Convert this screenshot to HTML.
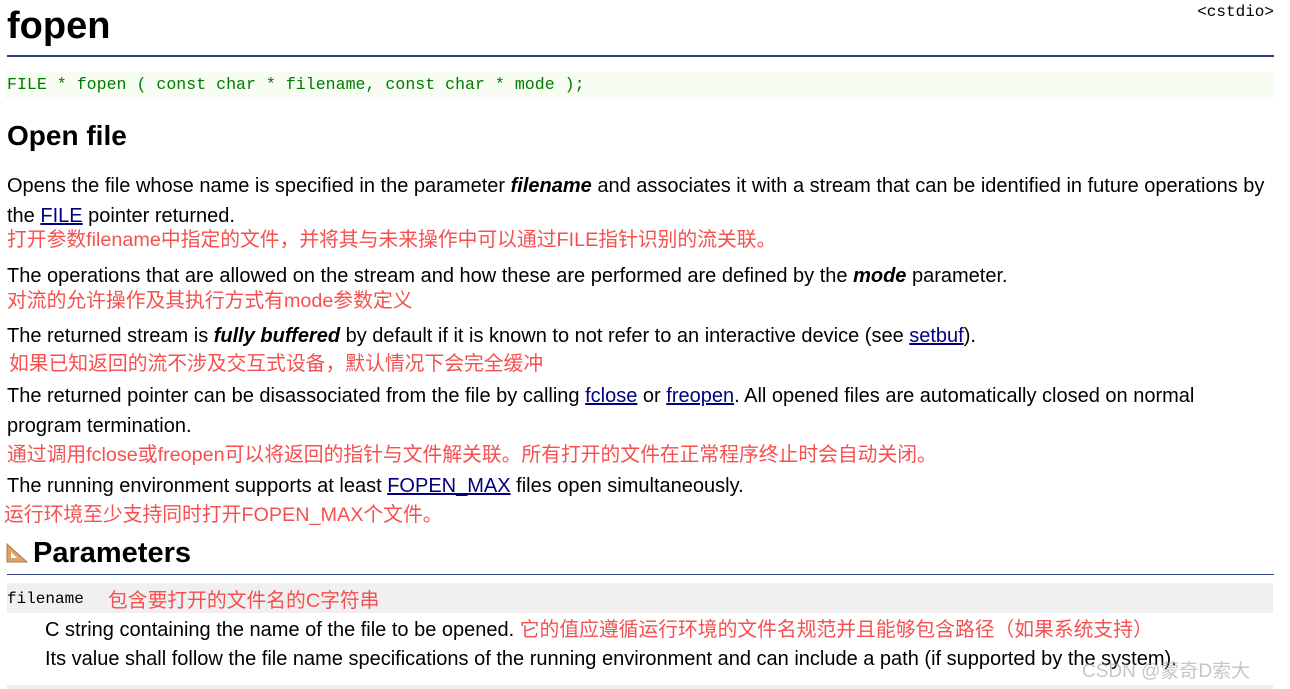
<!DOCTYPE html>
<html><head><meta charset="utf-8"><style>
body{margin:0;width:1290px;height:689px;background:#fff;position:relative;overflow:hidden;font-family:"Liberation Sans","Noto Sans CJK SC",sans-serif;color:#000}
.l{position:absolute;left:7px;white-space:nowrap;font-size:20px;line-height:22px}
.r{color:#f5504f;font-size:19.8px}
a{color:#000080;text-decoration:underline}
.m{font-family:"Liberation Mono",monospace}
</style></head><body>
<div style="position:absolute;left:7px;top:2px;font-size:38px;font-weight:bold;line-height:48px">fopen</div>
<div class="m" style="position:absolute;right:16px;top:3px;font-size:16px">&lt;cstdio&gt;</div>
<div style="position:absolute;left:7px;top:55px;width:1267px;height:2px;background:#2d3f78"></div>
<div style="position:absolute;left:5px;top:72px;width:1268px;height:27px;background:#f7fdf2"></div>
<div class="m" style="position:absolute;left:7px;top:75px;font-size:16.6px;color:#007a00;line-height:20px">FILE * fopen ( const char * filename, const char * mode );</div>
<div style="position:absolute;left:7px;top:119px;font-size:28px;font-weight:bold;line-height:34px">Open file</div>
<div class="l" style="top:175px">Opens the file whose name is specified in the parameter <b><i>filename</i></b> and associates it with a stream that can be identified in future operations by</div>
<div class="l" style="top:205px">the <a>FILE</a> pointer returned.</div>
<div class="l r" style="top:229px">打开参数filename中指定的文件，并将其与未来操作中可以通过FILE指针识别的流关联。</div>
<div class="l" style="top:265px">The operations that are allowed on the stream and how these are performed are defined by the <b><i>mode</i></b> parameter.</div>
<div class="l r" style="top:290px">对流的允许操作及其执行方式有mode参数定义</div>
<div class="l" style="top:325px">The returned stream is <b><i>fully buffered</i></b> by default if it is known to not refer to an interactive device (see <a>setbuf</a>).</div>
<div class="l r" style="top:353px;left:9px">如果已知返回的流不涉及交互式设备，默认情况下会完全缓冲</div>
<div class="l" style="top:385px">The returned pointer can be disassociated from the file by calling <a>fclose</a> or <a>freopen</a>. All opened files are automatically closed on normal</div>
<div class="l" style="top:415px">program termination.</div>
<div class="l r" style="top:444px">通过调用fclose或freopen可以将返回的指针与文件解关联。所有打开的文件在正常程序终止时会自动关闭。</div>
<div class="l" style="top:475px">The running environment supports at least <a>FOPEN_MAX</a> files open simultaneously.</div>
<div class="l r" style="top:504px;left:4px">运行环境至少支持同时打开FOPEN_MAX个文件。</div>
<svg style="position:absolute;left:6px;top:543px" width="22" height="20" viewBox="0 0 22 20"><polygon points="1,1 1,19 21,19" fill="#d9a46a" stroke="#b07a40"/><polygon points="5,9 5,15 11,15" fill="#fff"/></svg>
<div style="position:absolute;left:33px;top:536px;font-size:29px;font-weight:bold;line-height:34px">Parameters</div>
<div style="position:absolute;left:7px;top:574px;width:1267px;height:1px;background:#2d3f78"></div>
<div style="position:absolute;left:7px;top:583px;width:1266px;height:30px;background:#f0f0f0"></div>
<div class="m" style="position:absolute;left:7px;top:589px;font-size:16px;line-height:20px">filename</div>
<div class="l r" style="top:590px;left:108px">包含要打开的文件名的C字符串</div>
<div class="l" style="top:619px;left:45px">C string containing the name of the file to be opened. <span class="r">它的值应遵循运行环境的文件名规范并且能够包含路径（如果系统支持）</span></div>
<div class="l" style="top:648px;left:45px">Its value shall follow the file name specifications of the running environment and can include a path (if supported by the system).</div>
<div style="position:absolute;left:1082px;top:656px;font-size:19px;color:rgba(160,160,160,.6)">CSDN @蒙奇D索大</div>
<div style="position:absolute;left:7px;top:685px;width:1266px;height:4px;background:#f0f0f0"></div>
</body></html>
